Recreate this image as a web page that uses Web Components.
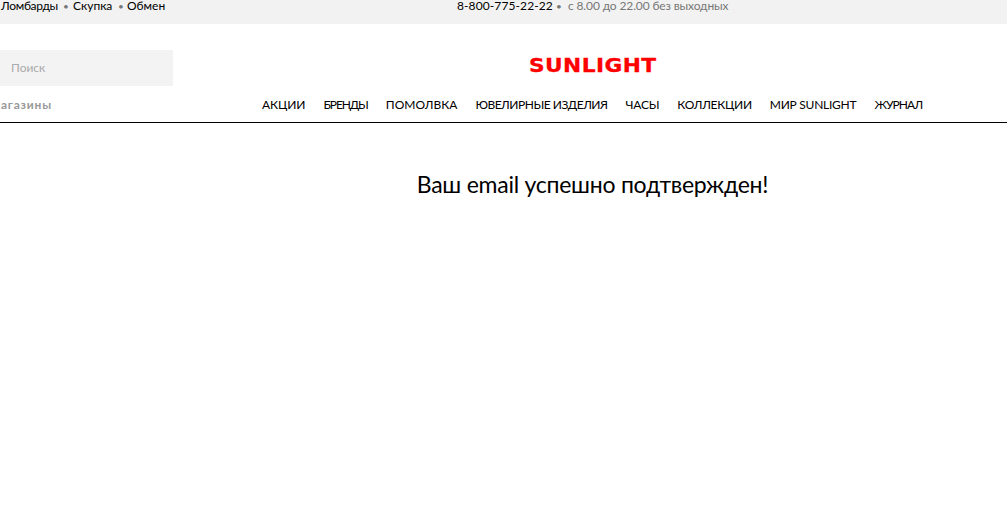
<!DOCTYPE html>
<html lang="ru"><head><meta charset="utf-8"><title>Sunlight</title>
<style>html,body{margin:0;padding:0;background:#fff;overflow:hidden}body{font-family:"Lato","Liberation Sans",sans-serif;color:#000;width:1007px;height:507px}</style>
</head><body>
<site-topbar></site-topbar>
<site-header></site-header>
<confirm-message>Ваш email успешно подтвержден!</confirm-message>
<script>
function def(name,html){customElements.define(name,class extends HTMLElement{constructor(){super();this.attachShadow({mode:'open'}).innerHTML=html;}});}
def('site-topbar',`<style>
:host{display:grid;grid-template-columns:457px 1fr;height:24px;background:#f2f2f2;font-size:12px;line-height:12px}
.row{display:flex;align-items:flex-start;white-space:nowrap}
a{color:#000;text-decoration:none}
.left{padding-left:1px}
.l1{letter-spacing:-.3px;width:56px}
.l2{width:39px}
.l3{width:38px}
.dot{color:#777;font-size:10px;width:16px;box-sizing:border-box;padding-left:6px}
.left .d2{width:15px;padding-left:6px}
.d3{width:15px;box-sizing:border-box;padding-left:3px;font-size:10px;color:#777}
.hours{color:#777;letter-spacing:-.13px}
.phone{letter-spacing:.1px;width:96px}
</style>
<div class="row left"><a class="l1">Ломбарды</a><span class="dot">•</span><a class="l2">Скупка</a><span class="dot d2">•</span><a class="l3">Обмен</a></div>
<div class="row"><a class="phone">8-800-775-22-22</a><span class="d3">•</span><span class="hours">с 8.00 до 22.00 без выходных</span></div>`);
def('search-box',`<style>
:host{display:flex;align-items:center;width:173px;height:36px;background:#f3f3f3;box-sizing:border-box;padding:0 0 2px 11px;font-size:12px;color:#aaa}
</style><slot></slot>`);
def('site-logo',`<style>
:host{display:block;width:127px;height:20px}
span{display:inline-block;font:bold 20px/20px "DejaVu Sans",sans-serif;color:#f00;transform-origin:0 50%;transform:scaleX(1.085);white-space:nowrap;letter-spacing:.4px;-webkit-text-stroke:.3px #f00}
</style><span>SUNLIGHT</span>`);
def('main-nav',`<style>
:host{display:flex;gap:18px;font-size:12px;line-height:16px;white-space:nowrap}
a{color:#000;text-decoration:none}
</style>
<a style="letter-spacing:-.08px">АКЦИИ</a><a style="letter-spacing:-1.1px">БРЕНДЫ</a><a>ПОМОЛВКА</a><a style="letter-spacing:-.49px">ЮВЕЛИРНЫЕ ИЗДЕЛИЯ</a><a style="letter-spacing:-.2px">ЧАСЫ</a><a style="letter-spacing:-.3px">КОЛЛЕКЦИИ</a><a style="letter-spacing:-.25px">МИР SUNLIGHT</a><a style="letter-spacing:-.9px">ЖУРНАЛ</a>`);
def('site-header',`<style>
:host{display:block;height:98px;border-bottom:1px solid #000;overflow:hidden}
.top{display:grid;grid-template-columns:173px 356px auto;height:62px;align-items:start}
search-box{margin-top:26px}
site-logo{margin-top:31px;grid-column:3}
.bottom{display:grid;grid-template-columns:262px auto;height:36px;align-items:start;padding-top:11px}
.shops{font-size:12px;line-height:16px;font-weight:700;letter-spacing:.8px;color:#999;overflow:hidden;white-space:nowrap;text-indent:-11px}
</style>
<div class="top"><search-box>Поиск</search-box><span></span><site-logo></site-logo></div>
<div class="bottom"><div class="shops">Магазины</div><main-nav></main-nav></div>`);
def('confirm-message',`<style>
:host{display:block;text-align:center;font-size:23px;letter-spacing:-.25px;line-height:30px;margin-top:46px;padding-left:178px;width:829px}
</style><slot></slot>`);
</script>
</body></html>
